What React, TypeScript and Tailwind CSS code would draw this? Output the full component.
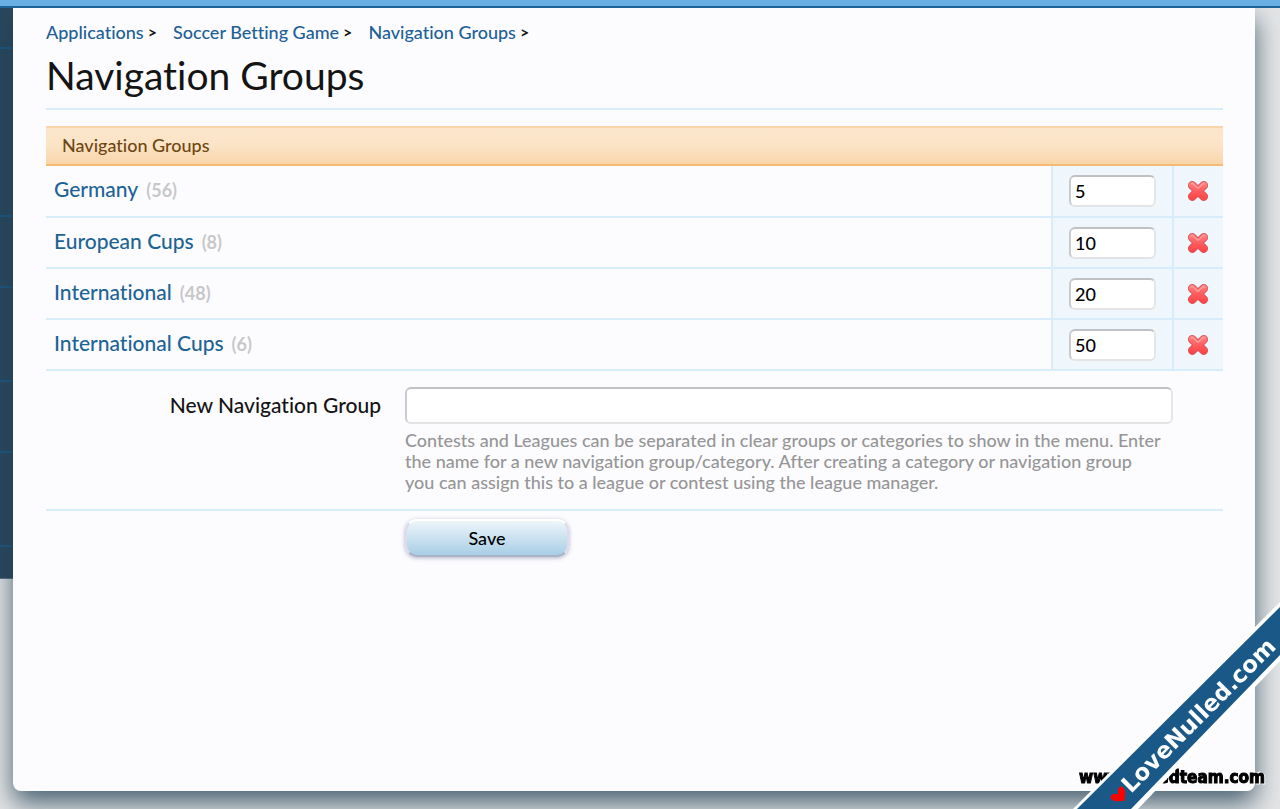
import { useState } from 'react';

interface NavGroup {
  id: string;
  title: string;
  count: number;
  order: string;
}

const initialGroups: NavGroup[] = [
  { id: 'germany', title: 'Germany', count: 56, order: '5' },
  { id: 'european-cups', title: 'European Cups', count: 8, order: '10' },
  { id: 'international', title: 'International', count: 48, order: '20' },
  { id: 'international-cups', title: 'International Cups', count: 6, order: '50' },
];

const crumbs = ['Applications', 'Soccer Betting Game', 'Navigation Groups'];

// heights of the sidebar blocks still visible beside the panel
const sideBlocks = ['h-[41px]', 'h-42', 'h-[71px]', 'h-[94px]', 'h-[71px]', 'h-[94px]'];

const inputStyle =
  'rounded-md border-2 border-t-[#bfc1c3] border-l-[#c9cbcd] border-r-[#e4e6e8] border-b-[#e4e4e6] bg-white text-black outline-none';

function DeleteIcon() {
  return (
    <svg viewBox="0 0 22 22" className="size-[22px]" aria-hidden="true">
      <defs>
        <linearGradient id="deleteFill" gradientUnits="userSpaceOnUse" x1="0" y1="1" x2="0" y2="21">
          <stop offset="0" stopColor="#ff8a8a" />
          <stop offset="0.5" stopColor="#ff5c5e" />
          <stop offset="1" stopColor="#fb3f42" />
        </linearGradient>
      </defs>
      <g fill="none" strokeLinecap="round">
        <path d="M5.2 5.4L16.8 16.6M16.8 5.4L5.2 16.6" stroke="#d9575c" strokeWidth="8.6" />
        <path d="M5.2 5.4L16.8 16.6M16.8 5.4L5.2 16.6" stroke="url(#deleteFill)" strokeWidth="6.8" />
        <path d="M4.2 4.2L5.8 3.6L11 8.4L16.2 3.6L17.8 4.2" stroke="#ff9c9c" strokeWidth="1.3" strokeLinejoin="round" />
      </g>
    </svg>
  );
}

function Ribbon() {
  return (
    <div className="pointer-events-none fixed right-0 bottom-0">
      <svg viewBox="0 0 210 210" className="size-[210px]">
        <text
          x="9"
          y="184"
          fontSize="17"
          fontWeight="700"
          fill="#000"
          stroke="#000"
          strokeWidth="1"
          className="font-['DejaVu_Sans_Condensed','DejaVu_Sans',sans-serif] [filter:drop-shadow(1px_1px_0_#fff)_drop-shadow(-1px_-1px_0_#fff)]"
        >
          www.nulledteam.com
        </text>
        <path d="M210 3L3 210H68L210 62Z" fill="#fff" />
        <path d="M210 8L7 210H61L210 56Z" fill="#1a5987" />
        <path
          d="M0 5C-2 -1 -10 -1 -8 5C-7 9 -2 11 0 14C2 11 7 9 8 5C10 -1 2 -1 0 5Z"
          transform="translate(45 192) rotate(-45)"
          fill="#f00"
        />
        <text
          transform="translate(61 195) rotate(-45)"
          fontSize="23"
          fontWeight="700"
          fill="#fff"
          className="font-['DejaVu_Sans',sans-serif]"
        >
          LoveNulled.com
        </text>
      </svg>
    </div>
  );
}

export default function App() {
  const [groups, setGroups] = useState(initialGroups);
  const [newGroup, setNewGroup] = useState('');

  const updateOrder = (id: string, order: string) => {
    setGroups(groups.map((group) => (group.id === id ? { ...group, order } : group)));
  };

  const removeGroup = (id: string) => {
    setGroups(groups.filter((group) => group.id !== id));
  };

  return (
    <div className="flex min-h-screen flex-col overflow-hidden bg-[#e4e5e6] font-['Trebuchet_MS',Lato,sans-serif] text-[#141414] [font-variant-ligatures:none]">
      <div className="relative z-10 h-2 border-b-2 border-[#1f6498] bg-[#6ab0e4]" />

      <div className="flex flex-1">
        <aside className="w-[13px] shrink-0">
          {sideBlocks.map((height, i) => (
            <div key={i} className={`border-b-2 border-[#1d5680] bg-[#2a475c] ${height}`} />
          ))}
          <div className="h-8 border-b border-[#5b7486] bg-[#2a475c]" />
        </aside>

        <main className="relative mr-[25px] mb-[18px] flex-1 rounded-b-lg bg-[#fcfcff] pt-3 pr-8 pl-[33px] shadow-[0_12px_26px_#1f3d52c8]">
          <nav className="flex gap-4 text-lg leading-6">
            {crumbs.map((crumb) => (
              <span key={crumb} className="flex gap-1">
                <a href="#" className="font-medium text-[#215f96]">
                  {crumb}
                </a>
                <span className="text-base leading-6 font-bold">&gt;</span>
              </span>
            ))}
          </nav>

          <h1 className="border-b-2 border-[#d7edfc] pt-1.5 pb-2 text-[39px] leading-[50px]">
            Navigation Groups
          </h1>

          <form className="pt-4" onSubmit={(e) => e.preventDefault()}>
            <h2 className="h-10 border-t-2 border-b-2 border-t-[#f9d5a7] border-b-[#f6bb72] bg-linear-to-b from-[#fce6cb] via-[#fbe3c6] to-[#f8d5a9] px-4 text-lg leading-[35px] font-medium text-[#6f4712]">
              Navigation Groups
            </h2>

            <table className="w-full border-collapse">
              <tbody>
                {groups.map((group) => (
                  <tr key={group.id} className="h-[51px] border-b-2 border-[#d7edfc]">
                    <td className="px-2 pb-1">
                      <a href="#" className="text-[21px] font-medium text-[#1d6496]">
                        {group.title}
                      </a>
                      <span className="ml-2 text-lg font-bold text-[#c8c8c8]">({group.count})</span>
                    </td>
                    <td className="w-[121px] border-l-2 border-[#d7edfc] bg-[#eff6fc] px-4">
                      <input
                        type="text"
                        aria-label={`Display order of ${group.title}`}
                        value={group.order}
                        onChange={(e) => updateOrder(group.id, e.target.value)}
                        className={`block h-8 w-[87px] px-1 text-lg font-medium ${inputStyle}`}
                      />
                    </td>
                    <td className="w-[50px] border-l-2 border-[#d7edfc] bg-[#eff6fc] pr-0.5">
                      <button
                        type="button"
                        aria-label={`Delete ${group.title}`}
                        onClick={() => removeGroup(group.id)}
                        className="mx-auto block"
                      >
                        <DeleteIcon />
                      </button>
                    </td>
                  </tr>
                ))}
              </tbody>
            </table>

            <div className="flex gap-6 border-b-2 border-[#d7edfc] pt-4 pb-4">
              <label
                htmlFor="newGroup"
                className="w-[335px] shrink-0 text-right text-[21px] leading-9 font-medium"
              >
                New Navigation Group
              </label>
              <div className="mr-[50px] flex-1">
                <input
                  id="newGroup"
                  type="text"
                  value={newGroup}
                  onChange={(e) => setNewGroup(e.target.value)}
                  className={`block h-[37px] w-full px-2 text-xl ${inputStyle}`}
                />
                <p className="pt-1.5 pr-2 text-lg leading-[21px] font-medium text-[#969696]">
                  Contests and Leagues can be separated in clear groups or categories to show in the menu. Enter
                  the name for a new navigation group/category. After creating a category or navigation group
                  you can assign this to a league or contest using the league manager.
                </p>
              </div>
            </div>

            <div className="pt-2 pl-[359px]">
              <button
                type="submit"
                className="h-[38px] w-[164px] rounded-xl border-2 border-t-white border-r-[#dcdcec] border-b-[#a9b4c6] border-l-[#dcdcec] bg-linear-to-b from-[#edf5fa] to-[#a9cee6] text-lg font-medium text-black shadow-[0_1px_4px_#7a7a9a90]"
              >
                Save
              </button>
            </div>
          </form>
        </main>
      </div>

      <Ribbon />
    </div>
  );
}
